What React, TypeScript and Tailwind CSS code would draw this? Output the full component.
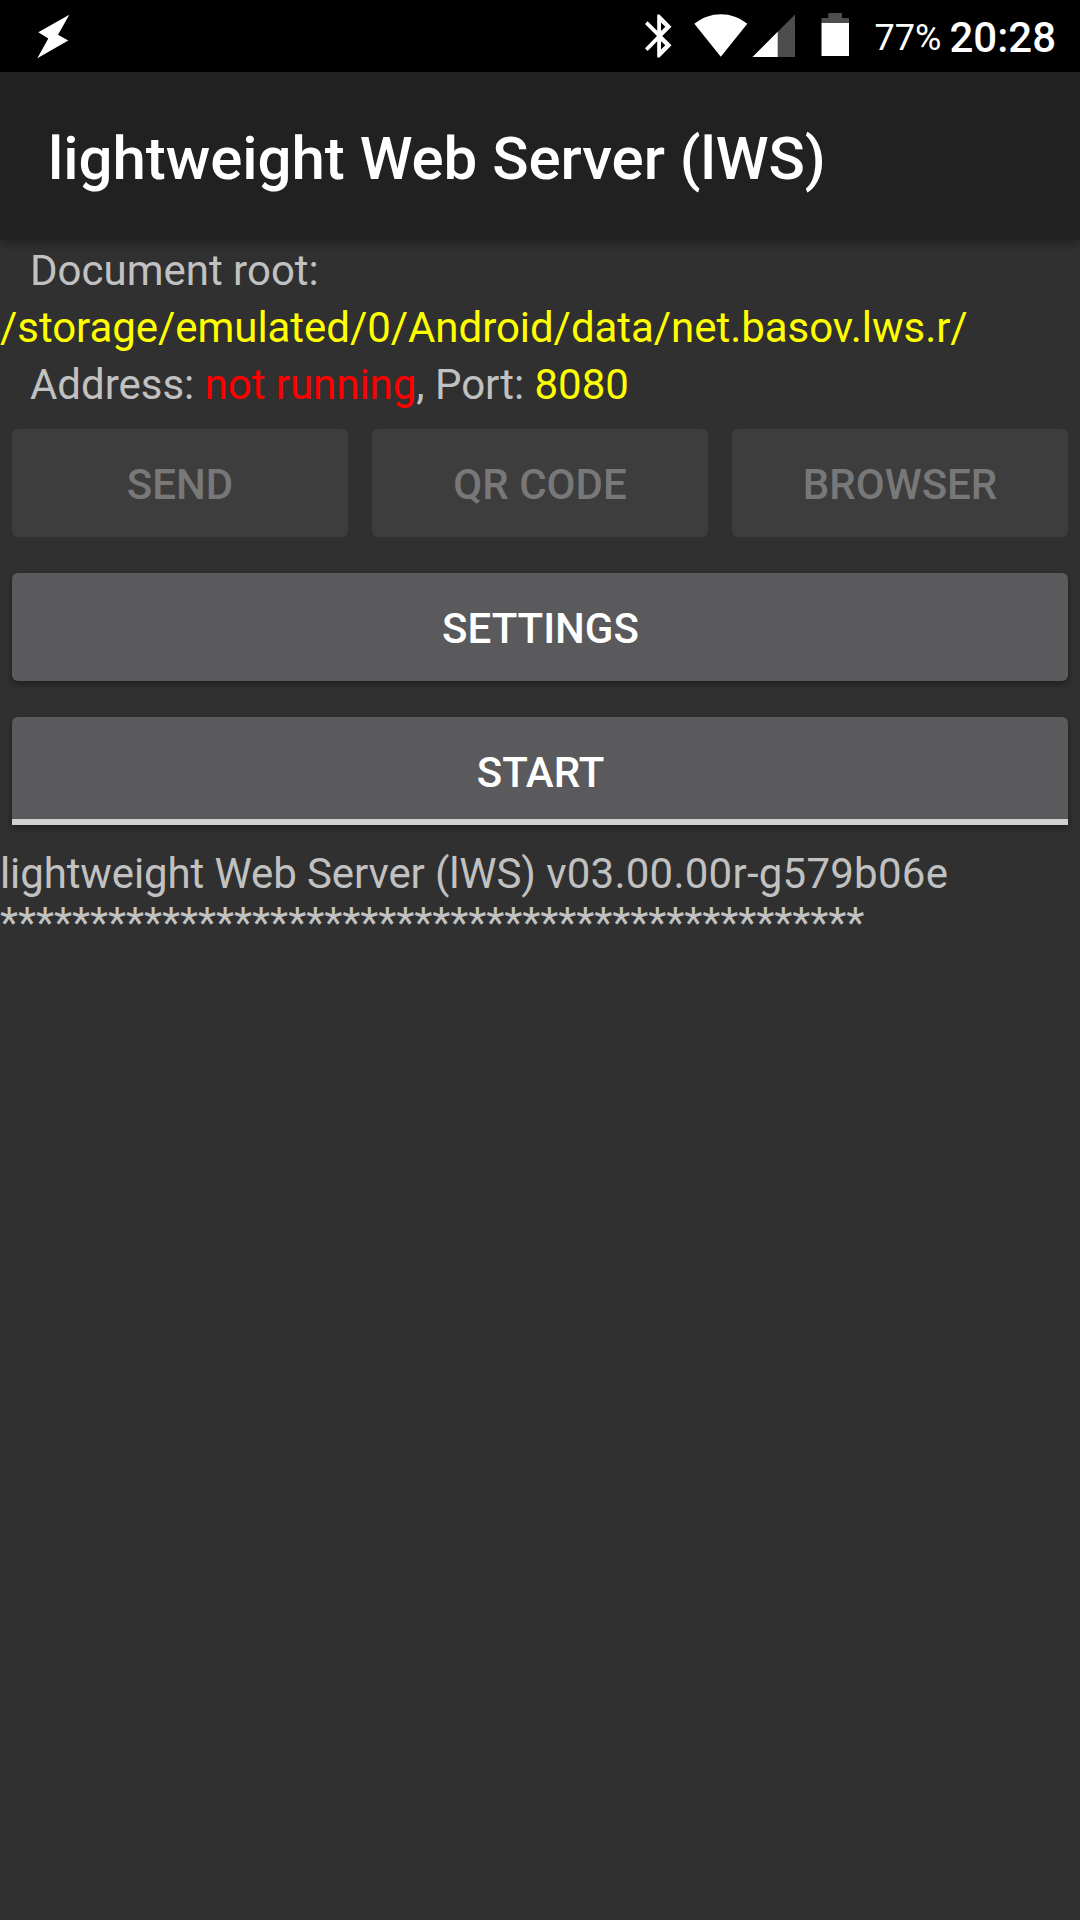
import React from 'react';

function BoltIcon() {
  return (
    <svg width="34" height="46" viewBox="0 0 34 46" className="ml-9 mt-[14px]" fill="#fff">
      <path d="M33.300 0.800L2.300 18.300L12.300 24.500L1.300 44.200L32.300 26.500L22 20.700Z" />
    </svg>
  );
}

function BluetoothIcon() {
  return (
    <svg width="28" height="44" viewBox="0 0 28 44" className="mt-[14px]" fill="#fff">
      <path
        fillRule="evenodd"
        d="M26.500 12.800L14.500 0.500H12.200V16.700L2.600 7.200L0 9.900L12 22L0 34.200L2.600 36.900L12.200 27.300V43.500H14.500L26.500 31.300L17.200 22ZM16 8.600L20.300 12.800L16 16.900ZM16 27.200L20.300 31.300L16 35.500Z"
      />
    </svg>
  );
}

function WifiIcon() {
  return (
    <svg width="54" height="44" viewBox="0 0 54 44" className="ml-[21px] mt-[14px]" fill="#fff">
      <path d="M0.300 9.800C8 3.500 17 0.200 26.800 0.200S45.500 3.500 53.300 9.800L26.800 42.700Z" />
    </svg>
  );
}

function SignalIcon() {
  return (
    <svg width="44" height="44" viewBox="0 0 44 44" className="ml-[4px] mt-[14px]">
      <path d="M43 0.500V43H0.500Z" fill="#4d4d4d" />
      <path d="M25.700 17.800V43H0.500Z" fill="#fff" />
    </svg>
  );
}

function BatteryIcon() {
  return (
    <svg width="28" height="44" viewBox="0 0 28 44" className="ml-[25px] mt-[13px]">
      <path d="M7.300 0H21V5H28V10H0.500V5H7.300Z" fill="#4d4d4d" />
      <path d="M0.500 10H28V43H0.500Z" fill="#fff" />
    </svg>
  );
}

function DisabledButton({ label }: { label: string }) {
  return (
    <button disabled className="h-[108px] flex-1 rounded-[6px] bg-[#3d3d3d] pt-[3px] text-[42px] font-medium leading-[49px] text-[#787878]">
      {label}
    </button>
  );
}

export default function App() {
  return (
    <div className="flex h-[1920px] w-[1080px] flex-col overflow-hidden bg-[#303030] font-['Roboto',sans-serif] text-[42px] leading-[49px] text-[#c1c1c1]">
      <header className="flex h-[72px] shrink-0 items-start bg-black text-white">
        <BoltIcon />
        <div className="ml-auto flex items-start pr-[24px]">
          <BluetoothIcon />
          <WifiIcon />
          <SignalIcon />
          <BatteryIcon />
          <span className="ml-[26px] mt-[17px] text-[36px] leading-[42px]">77%</span>
          <span className="ml-[8px] mt-[13px] text-[42px] font-medium leading-[49px]">20:28</span>
        </div>
      </header>
      <div className="flex h-[168px] shrink-0 items-center bg-[#212121] pl-[48px] pt-[6px] text-[60px] font-medium text-white shadow-[0_3px_10px_rgba(0,0,0,0.3)]">
        <h1 className="whitespace-pre leading-[70px] tracking-[-0.04px]">lightweight Web Server (lWS)</h1>
      </div>
      <div className="whitespace-pre pt-[2px] leading-[57px]">
        <p className="pl-[30px]">Document root:</p>
        <p className="tracking-[-0.05px] text-[#ffff00]">/storage/emulated/0/Android/data/net.basov.lws.r/</p>
        <p className="pl-[30px] tracking-[-0.03px]">
          Address: <span className="text-[#ff0000]">not running</span>, Port: <span className="text-[#ffff00]">8080</span>
        </p>
      </div>
      <div className="mt-[16px] flex gap-6 px-3">
        <DisabledButton label="SEND" />
        <DisabledButton label="QR CODE" />
        <DisabledButton label="BROWSER" />
      </div>
      <div className="mt-9 flex flex-col gap-9 px-3 font-medium text-white">
        <button className="h-[108px] rounded-[6px] bg-[#5a5a5c] pl-px pt-[3px] shadow-[0_3px_6px_rgba(0,0,0,0.4)]">SETTINGS</button>
        <button className="h-[108px] rounded-t-[6px] border-b-[6px] border-[#cfcfcf] bg-[#5a5a5c] pl-px pt-[9px] shadow-[0_3px_6px_rgba(0,0,0,0.4)]">START</button>
      </div>
      <div className="mt-[24px] whitespace-pre">
        <p>
          <span className="tracking-[-0.11px]">lightweight Web Server (lWS) </span>
          <span className="tracking-[0.24px]">v03.00.00r-g579b06e</span>
        </p>
        <p className="tracking-[-0.08px]">************************************************</p>
      </div>
    </div>
  );
}
